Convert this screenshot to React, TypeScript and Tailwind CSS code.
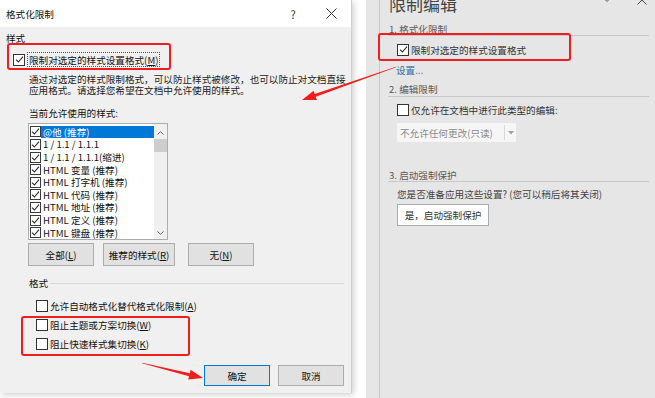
import React from "react";

function Box({ checked, small }: { checked?: boolean; small?: boolean }) {
  return (
    <span
      className={
        small
          ? "flex h-[11px] w-[11px] shrink-0 items-center justify-center border border-[#3a3a3a] bg-white"
          : "flex h-[12px] w-[12px] shrink-0 items-center justify-center border border-[#333333] bg-white"
      }
    >
      {checked && (
        <svg width="9" height="9" viewBox="0 0 9 9">
          <path d="M1 4.6 L3.4 7 L8 1.6" fill="none" stroke="#2a2a2a" strokeWidth="1.1" />
        </svg>
      )}
    </span>
  );
}

const items = [
  "@他 (推荐)",
  "1 / 1.1 / 1.1.1",
  "1 / 1.1 / 1.1.1(缩进)",
  "HTML 变量 (推荐)",
  "HTML 打字机 (推荐)",
  "HTML 代码 (推荐)",
  "HTML 地址 (推荐)",
  "HTML 定义 (推荐)",
  "HTML 键盘 (推荐)",
];

export default function App() {
  return (
    <div className="relative flex h-[398px] w-[655px] overflow-hidden bg-white font-['Noto_Sans_CJK_SC',sans-serif] text-[9.6px] leading-[12px] text-[#111]">
      {/* Dialog */}
      <div className="flex h-[393px] w-[352px] shrink-0 flex-col border-r border-[#cfcfcf] bg-[#f0f0f0] shadow-[2px_2px_6px_rgba(0,0,0,0.18)]">
        <div className="flex h-[27px] shrink-0 items-center bg-white pl-[6px]">
          <span>格式化限制</span>
          <span className="flex-1" />
          <span className="w-[12px] text-center text-[11px] text-[#333]">?</span>
          <svg className="ml-[27px] mr-[14px]" width="11" height="11" viewBox="0 0 11 11">
            <path d="M0.5 0.5 L10.5 10.5 M10.5 0.5 L0.5 10.5" stroke="#333" strokeWidth="1" />
          </svg>
        </div>
        <div className="ml-[6px] mt-[5px] h-[12px]">样式</div>
        <div className="ml-[13px] mt-[8px] flex h-[15px] items-center">
          <Box checked />
          <span className="ml-[2px] flex h-[15px] items-center border border-dotted border-[#555] px-[1px]">
            限制对选定的样式设置格式(<u>M</u>)
          </span>
        </div>
        <div className="ml-[29px] mt-[6.5px] whitespace-nowrap leading-[11.5px] text-[#222]">
          <div>通过对选定的样式限制格式，可以防止样式被修改，也可以防止对文档直接</div>
          <div>应用格式。请选择您希望在文档中允许使用的样式。</div>
        </div>
        <div className="ml-[29px] mt-[10.5px] h-[12px]">当前允许使用的样式:</div>
        <div className="ml-[28px] mt-[4px] flex h-[117px] w-[140px] border border-[#acacac] bg-white">
          <div className="flex flex-1 flex-col pt-[1.5px]">
            {items.map((t, i) => (
              <div key={i} className="flex h-[12.75px] items-center">
                <span className="ml-[1px]">
                  <Box checked small />
                </span>
                {i === 0 ? (
                  <span className="flex h-full flex-1 items-center bg-[#0078d7] pl-[2px] text-white">{t}</span>
                ) : (
                  <span className="whitespace-nowrap pl-[2px]">{t}</span>
                )}
              </div>
            ))}
          </div>
          <div className="flex w-[13px] flex-col items-center bg-[#f0f0f0]">
            <svg className="mt-[7px]" width="7" height="4" viewBox="0 0 7 4">
              <path d="M0.5 3.5 L3.5 0.7 L6.5 3.5" fill="none" stroke="#606060" strokeWidth="1" />
            </svg>
            <div className="mt-[4px] h-[13px] w-full bg-[#cdcdcd]" />
            <svg className="mt-[79px]" width="7" height="4" viewBox="0 0 7 4">
              <path d="M0.5 0.5 L3.5 3.3 L6.5 0.5" fill="none" stroke="#606060" strokeWidth="1" />
            </svg>
          </div>
        </div>
        <div className="ml-[28px] mt-[3px] flex h-[23px]">
          <div className="flex w-[66px] items-center justify-center border border-[#adadad] bg-[#e1e1e1]">
            全部(<u>L</u>)
          </div>
          <div className="ml-[9px] flex w-[72px] items-center justify-center border border-[#adadad] bg-[#e1e1e1]">
            推荐的样式(<u>R</u>)
          </div>
          <div className="ml-[13px] flex w-[66px] items-center justify-center border border-[#adadad] bg-[#e1e1e1]">
            无(<u>N</u>)
          </div>
        </div>
        <div className="ml-[29px] mt-[11px] flex h-[12px] items-center">
          <span>格式</span>
          <span className="ml-[2px] mr-[7px] h-px flex-1 bg-[#dadada]" />
        </div>
        <div className="ml-[36px] mt-[7.5px] flex h-[19px] items-center">
          <Box />
          <span className="ml-[2px]">允许自动格式化替代格式化限制(<u>A</u>)</span>
        </div>
        <div className="ml-[36px] flex h-[19px] items-center">
          <Box />
          <span className="ml-[2px]">阻止主题或方案切换(<u>W</u>)</span>
        </div>
        <div className="ml-[36px] flex h-[19px] items-center">
          <Box />
          <span className="ml-[2px]">阻止快速样式集切换(<u>K</u>)</span>
        </div>
        <div className="mt-[11.5px] flex h-[21px] justify-end gap-[8px] pr-[7px]">
          <div className="flex w-[66px] items-center justify-center border border-[#0078d7] bg-[#e1e1e1]">确定</div>
          <div className="flex w-[66px] items-center justify-center border border-[#adadad] bg-[#e1e1e1]">取消</div>
        </div>
      </div>

      {/* Right task pane */}
      <div className="ml-[14px] flex flex-1">
        <div className="w-[14px] border-r border-[#c9c9c9] bg-[#e6e6e6]" />
        <div className="flex flex-1 flex-col bg-[#e6e6e6]">
          <div className="-mt-[6px] flex h-[20px] items-center pl-[9px]">
            <span className="text-[17px] leading-[20px] text-[#444]">限制编辑</span>
            <span className="flex-1" />
            <svg className="-mt-[1px] self-start" width="12" height="12" viewBox="0 0 12 12">
              <path d="M1 3.5 L6 8.5 L11 3.5" fill="none" stroke="#555" strokeWidth="1" />
            </svg>
            <svg className="ml-[24px] mr-[8px] mt-[1px] self-start" width="10" height="10" viewBox="0 0 10 10">
              <path d="M0.5 0.5 L9.5 9.5 M9.5 0.5 L0.5 9.5" stroke="#444" strokeWidth="1" />
            </svg>
          </div>
          <div className="ml-[8px] mr-[6px] mt-[9px] h-[13px] border-b border-[#c8c8c8] pl-[1px] text-[#5a5a5a]">
            1. 格式化限制
          </div>
          <div className="ml-[17px] mt-[7.5px] flex h-[12px] items-center">
            <Box checked />
            <span className="ml-[2px] text-[#333]">限制对选定的样式设置格式</span>
          </div>
          <div className="ml-[16px] mt-[8.5px] h-[12px] text-[#2f6ea5]">设置...</div>
          <div className="ml-[8px] mr-[6px] mt-[7px] h-[14px] border-b border-[#c8c8c8] pl-[1px] text-[#5a5a5a]">
            2. 编辑限制
          </div>
          <div className="ml-[17px] mt-[7px] flex h-[12px] items-center">
            <Box />
            <span className="ml-[2px] text-[#333]">仅允许在文档中进行此类型的编辑:</span>
          </div>
          <div className="ml-[17px] mt-[7px] flex h-[19px] w-[119px] items-center bg-[#f6f6f6]">
            <span className="flex-1 pl-[3px] text-[#8a8a8a]">不允许任何更改(只读)</span>
            <span className="flex h-[15px] w-[12px] items-center justify-center border-l border-[#d8d8d8]">
              <svg width="6" height="4" viewBox="0 0 6 4">
                <path d="M0 0 L6 0 L3 3.5 Z" fill="#a0a0a0" />
              </svg>
            </span>
          </div>
          <div className="ml-[8px] mr-[6px] mt-[27px] h-[13px] border-b border-[#c8c8c8] pl-[1px] text-[#5a5a5a]">
            3. 启动强制保护
          </div>
          <div className="ml-[17px] mt-[6px] h-[12px] text-[#444]">您是否准备应用这些设置? (您可以稍后将其关闭)</div>
          <div className="ml-[17px] mt-[4px] flex h-[22px] w-[92px] items-center justify-center border border-[#ababab] bg-white text-[#333]">
            是，启动强制保护
          </div>
        </div>
      </div>

      {/* Red annotations */}
      <div className="pointer-events-none absolute left-[7px] top-[43px] h-[27px] w-[164px] rounded-[3px] border-2 border-[#f21d1d]" />
      <div className="pointer-events-none absolute left-[21px] top-[316px] h-[40px] w-[169px] rounded-[3px] border-2 border-[#f21d1d]" />
      <div className="pointer-events-none absolute left-[378px] top-[33px] h-[28px] w-[193px] rounded-[3px] border-2 border-[#f21d1d]" />
      <svg className="pointer-events-none absolute left-0 top-0" width="655" height="398">
        <polygon
          points="396.1,67.3 315.7,96.8 316.9,100.1 302,100 313.6,90.7 314.7,94.0 395.9,66.7"
          fill="#f21d1d"
        />
        <polygon
          points="141.9,363.3 189.0,376.2 188.2,379.6 203,378 190.6,369.8 189.8,373.2 142.1,362.7"
          fill="#f21d1d"
        />
      </svg>
    </div>
  );
}
